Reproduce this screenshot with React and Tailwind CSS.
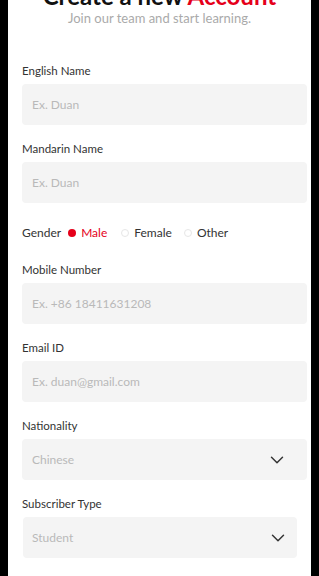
import { ChevronDown } from "lucide-react";

const FIELDS = [
  { label: "English Name", placeholder: "Ex. Duan" },
  { label: "Mandarin Name", placeholder: "Ex. Duan" },
];

const FIELDS2 = [
  { label: "Mobile Number", placeholder: "Ex. +86 18411631208" },
  { label: "Email ID", placeholder: "Ex. duan@gmail.com" },
];

function Field({ label, placeholder }) {
  return (
    <div className="flex flex-col">
      <label className="text-[11.5px] leading-[14px] text-[#333]">{label}</label>
      <div className="mt-[6px] h-[41px] rounded-[4px] bg-[#f4f4f4] flex items-center px-[10px] text-[12px] text-[#b9b9b9]">
        {placeholder}
      </div>
    </div>
  );
}

function Select({ label, value, narrow }) {
  return (
    <div className="flex flex-col">
      <label className="text-[11.5px] leading-[14px] text-[#333]">{label}</label>
      <div
        className={`mt-[6px] h-[41px] rounded-[4px] bg-[#f4f4f4] flex items-center justify-between text-[12px] text-[#b9b9b9] ${
          narrow ? "w-[274px] ml-[1px] pl-[9px] pr-[8px]" : "pl-[10px] pr-[19px]"
        }`}
      >
        <span>{value}</span>
        <ChevronDown size={22} strokeWidth={1.6} className="text-[#333]" />
      </div>
    </div>
  );
}

function Radio({ label, checked, className = "" }) {
  return (
    <div className={`flex items-center gap-[5px] ${className}`}>
      <span
        className={`w-[8px] h-[8px] rounded-full ${
          checked ? "bg-[#e5001a]" : "border border-[#e6e6e6] bg-white"
        }`}
      />
      <span className={checked ? "text-[#e5001a]" : "text-[#333]"}>{label}</span>
    </div>
  );
}

export default function App() {
  return (
    <div
      className="h-[576px] w-[319px] bg-black px-[8px] overflow-hidden"
      style={{ fontFamily: "Lato, 'Open Sans', sans-serif" }}
    >
      <div className="h-full bg-white overflow-hidden">
        <div className="-mt-[18px] flex flex-col items-center">
          <h1 className="text-[24px] leading-[28px] font-bold text-[#111] whitespace-nowrap">
            Create a new <span className="text-[#e5001a]">Account</span>
          </h1>
          <p className="text-[13px] leading-[16px] text-[#aaa]">Join our team and start learning.</p>
        </div>

        <div className="mt-[38px] pl-[14px] pr-[4px] flex flex-col gap-[17px]">
          {FIELDS.map((f) => (
            <Field key={f.label} {...f} />
          ))}
          <div className="flex items-center text-[12px] leading-[14px] text-[#333] mt-[6px] mb-[6px]">
            <span className="mr-[7px]">Gender</span>
            <Radio label="Male" checked />
            <Radio label="Female" className="ml-[14px]" />
            <Radio label="Other" className="ml-[12px]" />
          </div>
          {FIELDS2.map((f) => (
            <Field key={f.label} {...f} />
          ))}
          <Select label="Nationality" value="Chinese" />
          <Select label="Subscriber Type" value="Student" narrow />
        </div>
      </div>
    </div>
  );
}
